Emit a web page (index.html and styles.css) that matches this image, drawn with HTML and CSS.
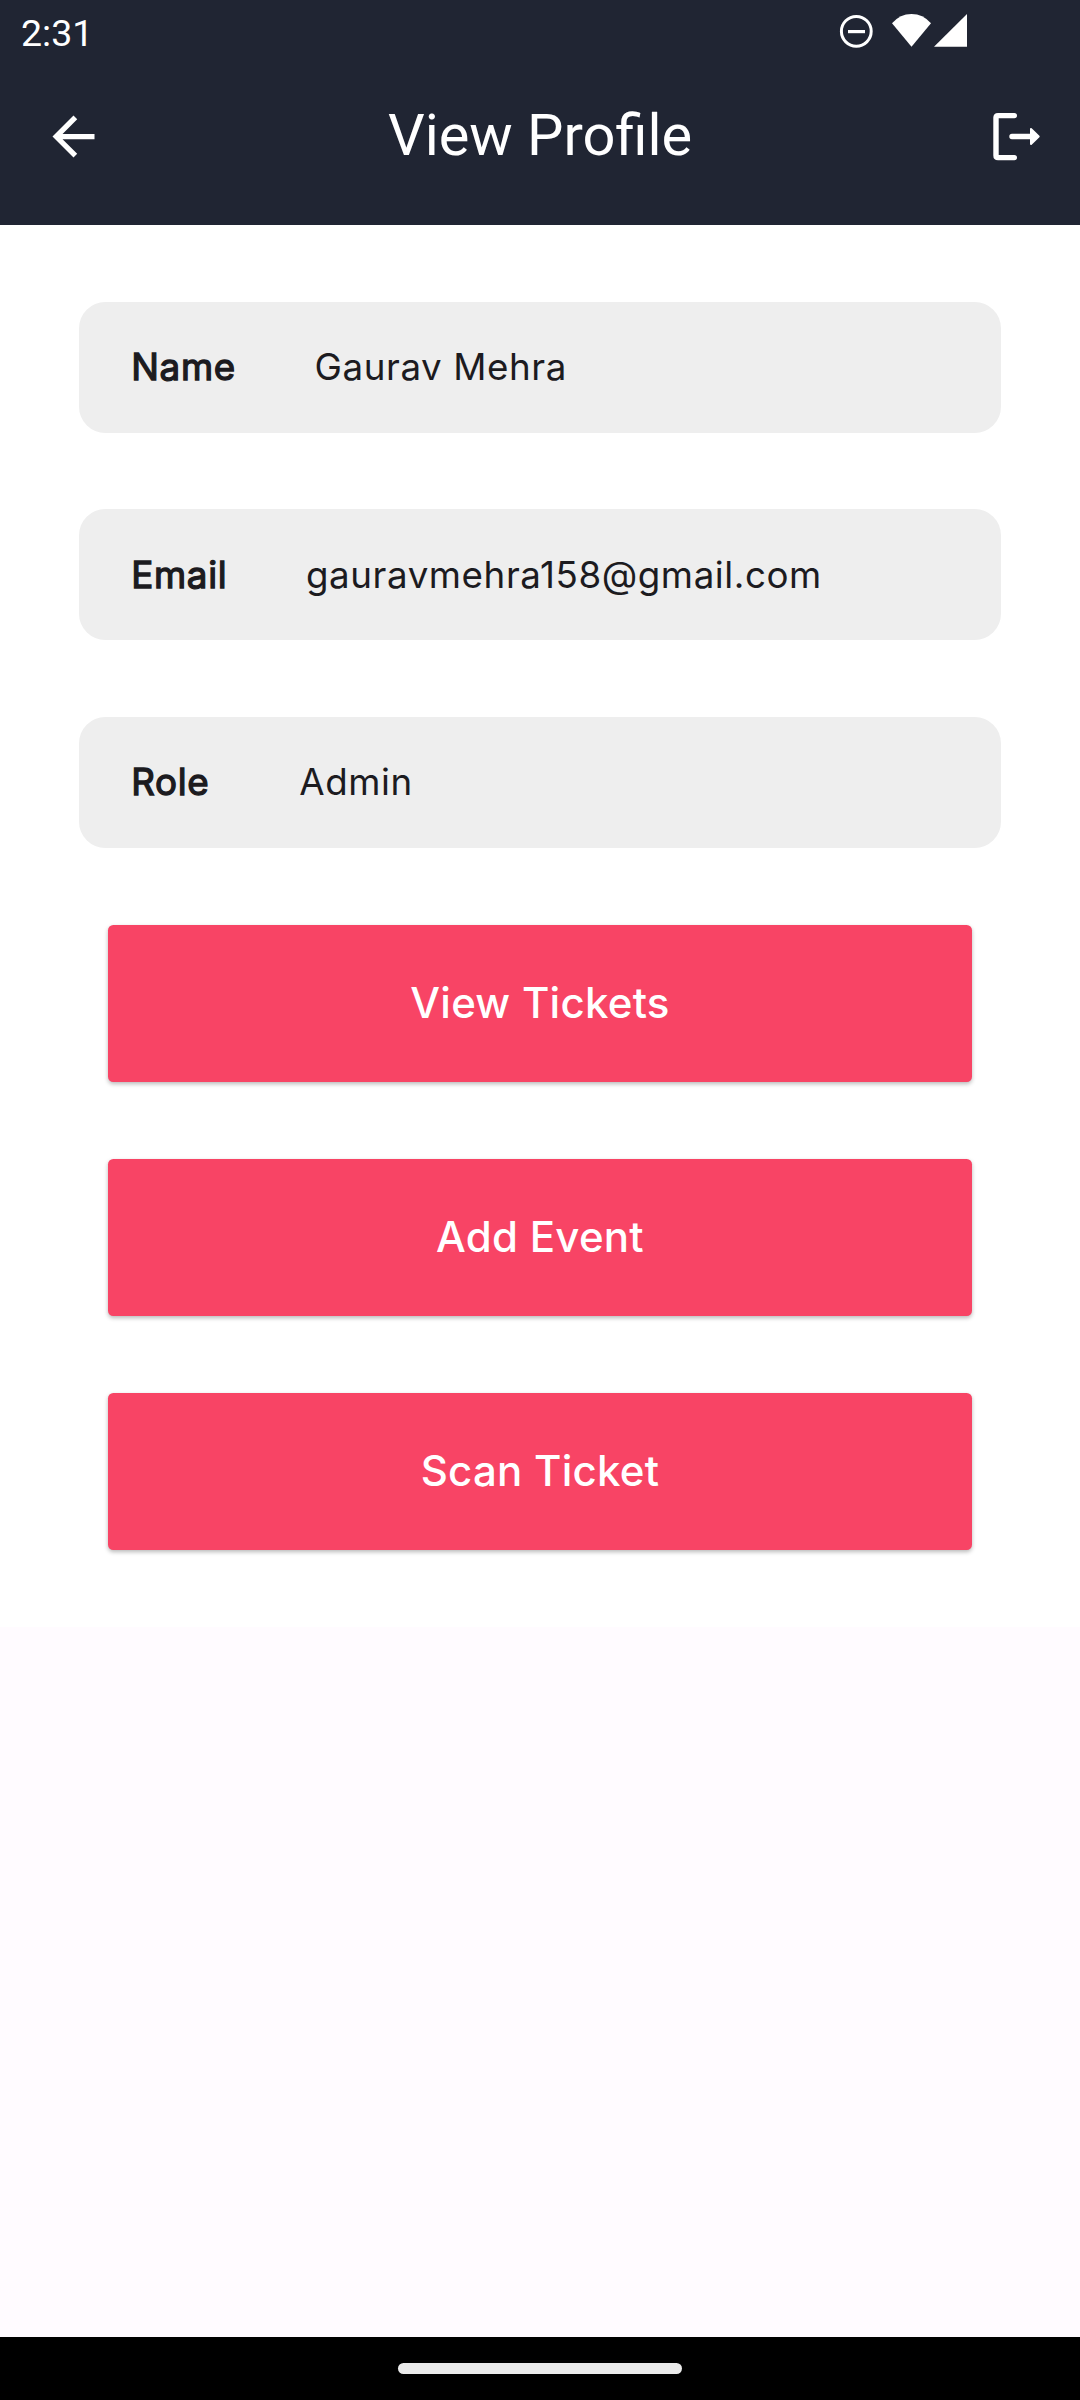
FILE: index.html
```html
<!DOCTYPE html>
<html lang="en">
<head>
<meta charset="utf-8">
<title>View Profile</title>
<link rel="stylesheet" href="styles.css">
</head>
<body>
<div class="screen">
  <header class="header">
    <div class="status">
      <span class="clock">2:31</span>
      <svg class="status-icons" width="130" height="38" viewBox="838 12 130 38">
        <circle cx="856.3" cy="31.3" r="14.9" fill="none" stroke="#fff" stroke-width="3"/>
        <path d="M848 30h17v3.2h-17z" fill="#fff"/>
        <path d="M892 23.3Q900 14 911.5 14T931 23.3L911.5 46.7z" fill="#fff"/>
        <path d="M967 14v32.7H934z" fill="#fff"/>
      </svg>
    </div>
    <div class="appbar">
      <svg class="back" width="63" height="63" viewBox="0 0 24 24"><path fill="#fff" d="M20 11H7.83l5.59-5.59L12 4l-8 8 8 8 1.41-1.41L7.83 13H20v-2z"/></svg>
      <h1 class="title">View Profile</h1>
      <svg class="logout" width="48" height="50" viewBox="993 112 48 50">
        <path d="M1014.3 115.6H998q-2 0-2 2v38q0 2 2 2h16.300M1012 136.500H1031" fill="none" stroke="#fff" stroke-width="5.400" stroke-linecap="round"/>
        <path d="M1031 129v15l7.700-7.500z" fill="#fff" stroke="#fff" stroke-width="2" stroke-linejoin="round"/>
      </svg>
    </div>
  </header>
  <main class="content">
    <div class="card"><span class="label">Name</span><span class="value">Gaurav Mehra</span></div>
    <div class="card"><span class="label">Email</span><span class="value">gauravmehra158@gmail.com</span></div>
    <div class="card card-role"><span class="label">Role</span><span class="value">Admin</span></div>
    <button class="action">View Tickets</button>
    <button class="action">Add Event</button>
    <button class="action">Scan Ticket</button>
  </main>
  <footer class="navbar"><div class="handle"></div></footer>
</div>
</body>
</html>
```
FILE: styles.css
```css
* { box-sizing: border-box; }
body { margin: 0; }
.screen {
  width: 1080px;
  height: 2400px;
  display: flex;
  flex-direction: column;
  background: #fffbff;
  font-family: Inter, sans-serif;
}
.header {
  height: 225px;
  flex: none;
  background: #202533;
  color: #fff;
  font-family: Roboto, sans-serif;
}
.status {
  height: 63px;
  display: flex;
  justify-content: space-between;
  align-items: flex-start;
  padding: 12px 112px 0 21px;
}
.clock { font-size: 37.500px; line-height: 43px; }
.appbar {
  height: 147px;
  display: flex;
  justify-content: space-between;
  align-items: center;
  padding: 0 39px 0 42px;
}
.title { margin: 0 0 4px -18px; font-size: 57.750px; font-weight: 400; line-height: 68px; }
.content {
  display: flex;
  flex-direction: column;
  align-items: center;
  gap: 76.700px;
  padding: 76.500px 0;
  background: #fff;
}
.card {
  width: 922.500px;
  height: 131px;
  border-radius: 26.250px;
  background: #eee;
  display: flex;
  align-items: center;
  gap: 78.750px;
  padding: 0 0 1px 52.500px;
  color: #1c1b1f;
  font-size: 36.750px;
  letter-spacing: 0.656px;
}
.card-role { gap: 90px; }
.label { -webkit-text-stroke: 1.300px #1c1b1f; }
.value { letter-spacing: 0.560px; }
.action {
  width: 864px;
  height: 157.500px;
  padding: 0 0 2px;
  border: 0;
  border-radius: 5.250px;
  background: #f84465;
  color: #fff;
  font: 500 42px Inter, sans-serif;
  letter-spacing: 0.262px;
  box-shadow: 0 2px 4px rgba(0, 0, 0, 0.28);
}
.navbar {
  height: 63px;
  margin-top: auto;
  background: #000;
  display: flex;
  justify-content: center;
  align-items: center;
}
.handle { width: 284px; height: 11px; border-radius: 6px; background: #ebebeb; }
```
